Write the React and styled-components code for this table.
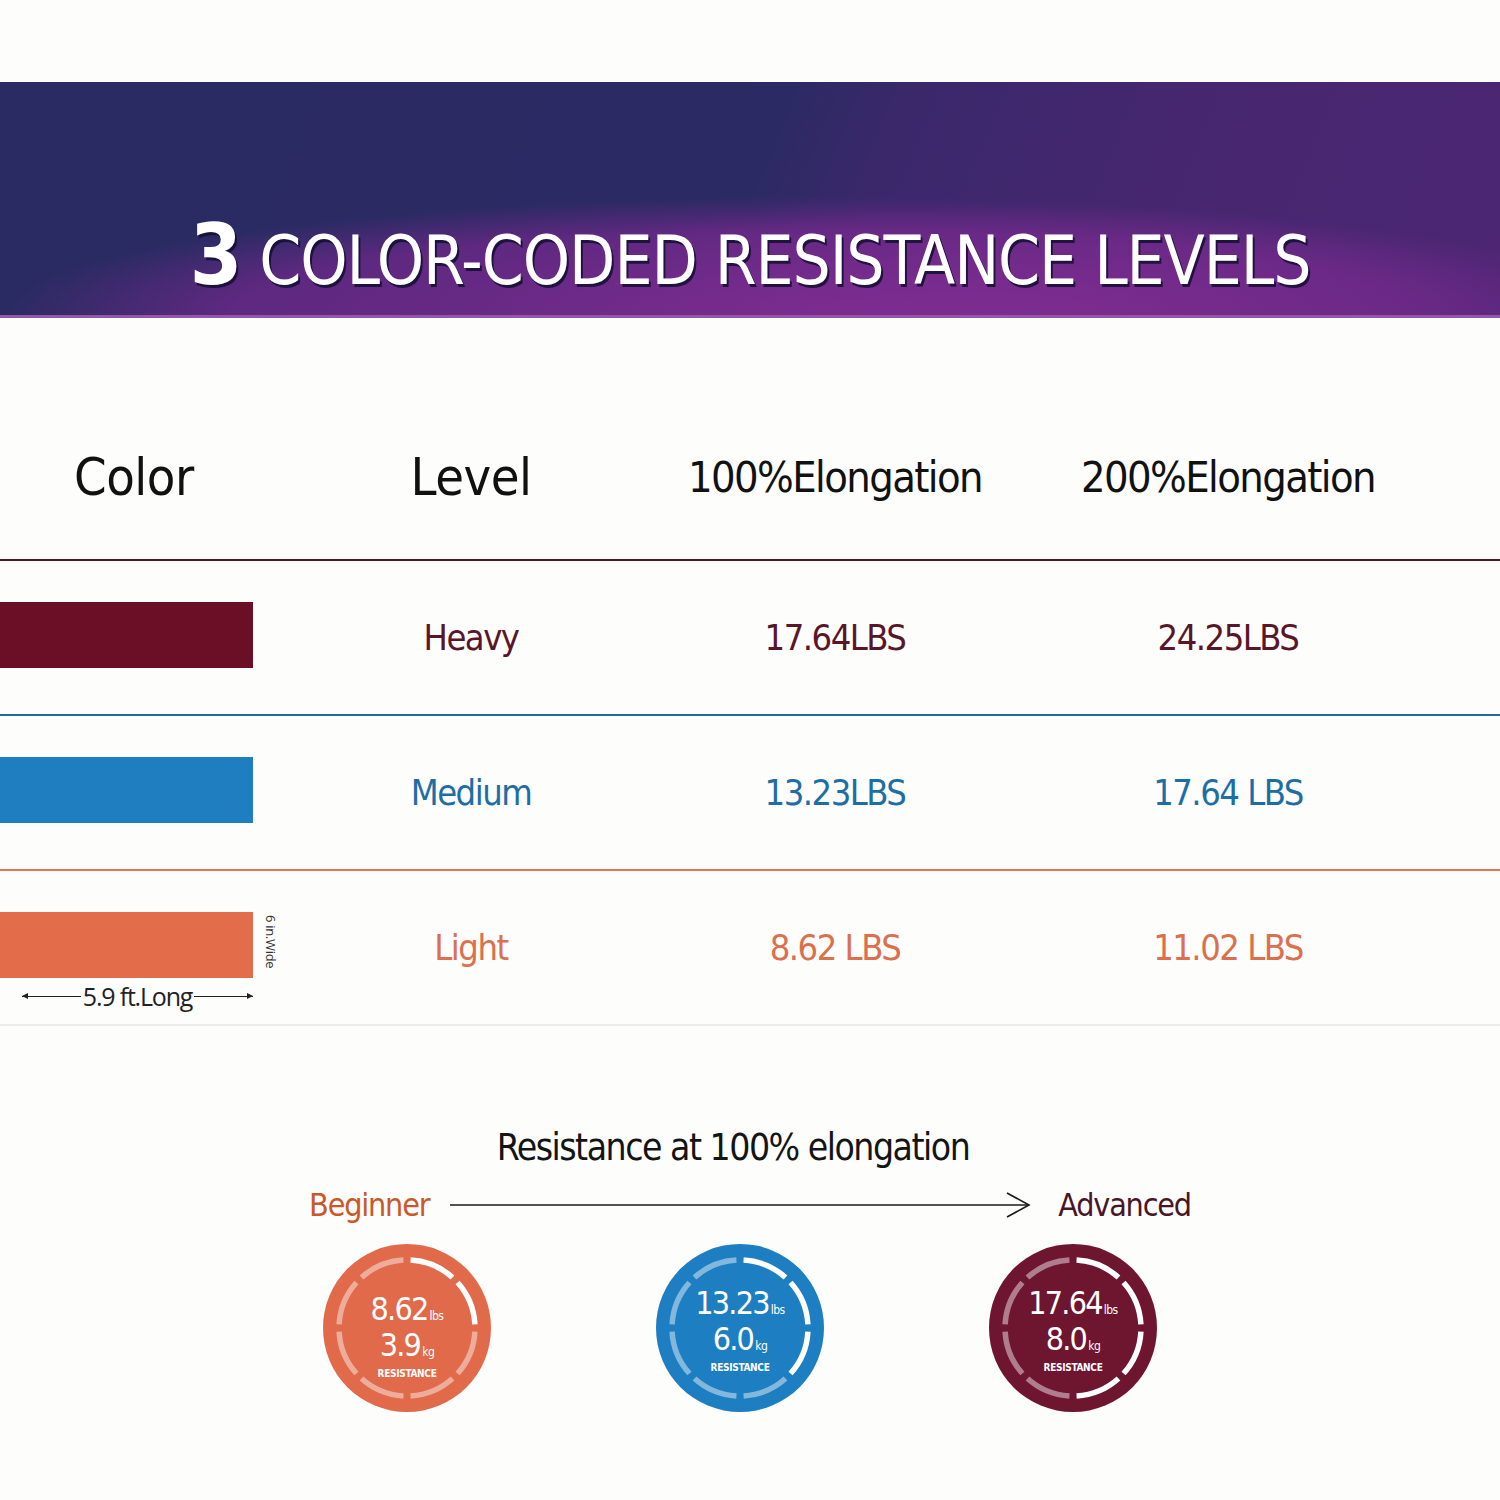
import React from "react";
import styled, { createGlobalStyle } from "styled-components";

const FONT = `"Liberation Sans Narrow", "DejaVu Sans Condensed", Roboto, sans-serif`;

const GlobalStyle = createGlobalStyle`
  body {
    margin: 0;
    background: #fdfdfb;
    font-family: ${FONT};
  }
`;

const Page = styled.div`
  width: 1500px;
  padding-top: 82px;
  padding-bottom: 80px;
  background: #fdfdfb;
`;

const Banner = styled.div`
  height: 236px;
  box-sizing: border-box;
  display: flex;
  align-items: flex-end;
  justify-content: center;
  padding-bottom: 18px;
  border-bottom: 3px solid #9456a8;
  background:
    radial-gradient(ellipse 560px 110px at 66% 100%, rgba(132, 46, 148, 0.7), rgba(132, 46, 148, 0) 100%),
    radial-gradient(ellipse 820px 118px at 55% 100%, rgba(116, 42, 140, 0.95) 0%, rgba(108, 40, 136, 0.8) 72%, rgba(100, 40, 130, 0) 100%),
    linear-gradient(112deg, #2a2b62 0%, #2c2a64 50%, #3a286b 57%, #46276f 75%, #4c2673 100%);
`;

const Title = styled.h1`
  margin: 0;
  display: flex;
  align-items: baseline;
  gap: 17px;
  color: #fff;
  font-weight: 400;
  font-size: 67px;
  line-height: 1;
  letter-spacing: -1.1px;
  text-shadow: 2px 3px 0 rgba(20, 14, 50, 0.85);
`;

const TitleNumber = styled.span`
  font-size: 84px;
  font-weight: 700;
  letter-spacing: 0;
`;

const COLS = "300px 342px 386px 400px";

const HeaderRow = styled.div`
  display: grid;
  grid-template-columns: ${COLS};
  align-items: center;
  height: 241px;
  box-sizing: border-box;
  padding-top: 76px;
`;

const HeadCell = styled.div`
  font-size: ${(p) => p.$size}px;
  letter-spacing: ${(p) => p.$ls}px;
  color: #111;
  text-align: ${(p) => (p.$left ? "left" : "center")};
  padding-left: ${(p) => (p.$left ? "74px" : "0")};
`;

const Table = styled.div`
  border-bottom: 2px solid #ececea;
`;

const Row = styled.div`
  display: grid;
  grid-template-columns: ${COLS};
  align-items: center;
  height: 155px;
  box-sizing: border-box;
  border-top: 2px solid ${(p) => p.$line};
`;

const SwatchCell = styled.div`
  align-self: start;
  padding-top: 41px;
  display: flex;
  flex-direction: column;
`;

const SwatchLine = styled.div`
  display: flex;
  align-items: flex-start;
`;

const Swatch = styled.div`
  width: 253px;
  height: 66px;
  background: ${(p) => p.$color};
`;

const SideLabel = styled.span`
  writing-mode: vertical-rl;
  font-family: "Open Sans", sans-serif;
  font-size: 13px;
  letter-spacing: -0.3px;
  color: #333;
  margin: 3px 0 0 9px;
`;

const Dimension = styled.div`
  display: flex;
  align-items: center;
  width: 231px;
  margin: 6px 0 0 22px;
  gap: 2px;
`;

const DimLine = styled.div`
  flex: 1;
  height: 1px;
  background: #222;
  position: relative;

  &::after {
    content: "";
    position: absolute;
    top: -3px;
    ${(p) => (p.$end ? "right: 0;" : "left: 0;")}
    border-top: 3.5px solid transparent;
    border-bottom: 3.5px solid transparent;
    ${(p) => (p.$end ? "border-left: 6px solid #222;" : "border-right: 6px solid #222;")}
  }
`;

const DimText = styled.span`
  font-family: "Open Sans", sans-serif;
  font-size: 25px;
  letter-spacing: -1.2px;
  color: #222;
  line-height: 1;
`;

const Cell = styled.div`
  font-size: 36px;
  letter-spacing: -1.5px;
  text-align: center;
  color: ${(p) => p.$color};
`;

const Lower = styled.div`
  padding-top: 98px;
  display: flex;
  flex-direction: column;
  align-items: center;
`;

const LowerTitle = styled.div`
  font-size: 37px;
  letter-spacing: -1.5px;
  color: #141414;
  line-height: 48px;
  margin-right: 34px;
`;

const ScaleRow = styled.div`
  display: flex;
  align-items: center;
  margin-top: 13px;
`;

const ScaleLabel = styled.span`
  font-size: 32px;
  letter-spacing: -1.2px;
  line-height: 40px;
  color: ${(p) => p.$color};
`;

const Arrow = styled.svg`
  margin: 0 26px 0 21px;
  display: block;
`;

const Badges = styled.div`
  display: flex;
  gap: 165px;
  margin-top: 19px;
  margin-right: 20px;
`;

const Badge = styled.div`
  position: relative;
  width: 168px;
  height: 168px;
  border-radius: 50%;
  background: ${(p) => p.$color};
  display: flex;
  flex-direction: column;
  align-items: center;
  justify-content: center;
  color: #fff;
  padding-top: ${(p) => p.$shift}px;
  box-sizing: border-box;
`;

const Ring = styled.svg`
  position: absolute;
  inset: 0;
`;

const Value = styled.div`
  font-size: 32px;
  line-height: 36px;
  height: 36px;
  letter-spacing: -1.8px;
`;

const Unit = styled.span`
  font-size: 12px;
  line-height: 1;
  letter-spacing: -0.5px;
  margin-left: 2px;
`;

const BadgeLabel = styled.div`
  font-size: 10px;
  line-height: 12px;
  font-weight: 700;
  margin-top: 5px;
  letter-spacing: -0.3px;
`;

const rows = [
  { level: "Heavy", swatch: "#6a0f25", text: "#5a1629", line: "#4d1424", e100: "17.64LBS", e200: "24.25LBS" },
  { level: "Medium", swatch: "#1f7ec0", text: "#1d6ea4", line: "#1f6aa0", e100: "13.23LBS", e200: "17.64 LBS" },
  { level: "Light", swatch: "#e36c4b", text: "#dc6f4c", line: "#e07450", e100: "8.62 LBS", e200: "11.02 LBS", dims: true },
];

const badges = [
  { lbs: "8.62", kg: "3.9", color: "#e06a4a", white: 2, shift: 14 },
  { lbs: "13.23", kg: "6.0", color: "#1e7ec2", white: 3, shift: 2 },
  { lbs: "17.64", kg: "8.0", color: "#6e1530", white: 4, shift: 2 },
];

const arcPath = (startDeg, endDeg, r) => {
  const toXY = (deg) => {
    const rad = ((deg - 90) * Math.PI) / 180;
    return [84 + r * Math.cos(rad), 84 + r * Math.sin(rad)];
  };
  const [x1, y1] = toXY(startDeg);
  const [x2, y2] = toXY(endDeg);
  return `M ${x1} ${y1} A ${r} ${r} 0 0 1 ${x2} ${y2}`;
};

const RingSegments = ({ white }) => (
  <Ring width="168" height="168" viewBox="0 0 168 168">
    {Array.from({ length: 8 }).map((_, i) => (
      <path
        key={i}
        d={arcPath(i * 45 + 3, i * 45 + 42, 68)}
        fill="none"
        stroke={i < white ? "#ffffff" : "rgba(255,255,255,0.45)"}
        strokeWidth="5.5"
      />
    ))}
  </Ring>
);

const App = () => {
  return (
    <Page>
      <GlobalStyle />
      <Banner>
        <Title>
          <TitleNumber>3</TitleNumber>
          COLOR-CODED RESISTANCE LEVELS
        </Title>
      </Banner>

      <HeaderRow>
        <HeadCell $size={52} $ls={-0.5} $left>Color</HeadCell>
        <HeadCell $size={52} $ls={-0.5}>Level</HeadCell>
        <HeadCell $size={43} $ls={-1.6}>100%Elongation</HeadCell>
        <HeadCell $size={43} $ls={-1.6}>200%Elongation</HeadCell>
      </HeaderRow>

      <Table>
        {rows.map((r) => (
          <Row key={r.level} $line={r.line}>
            <SwatchCell>
              <SwatchLine>
                <Swatch $color={r.swatch} />
                {r.dims && <SideLabel>6 in.Wide</SideLabel>}
              </SwatchLine>
              {r.dims && (
                <Dimension>
                  <DimLine />
                  <DimText>5.9 ft.Long</DimText>
                  <DimLine $end />
                </Dimension>
              )}
            </SwatchCell>
            <Cell $color={r.text}>{r.level}</Cell>
            <Cell $color={r.text}>{r.e100}</Cell>
            <Cell $color={r.text}>{r.e200}</Cell>
          </Row>
        ))}
      </Table>

      <Lower>
        <LowerTitle>Resistance at 100% elongation</LowerTitle>
        <ScaleRow>
          <ScaleLabel $color="#c8592b">Beginner</ScaleLabel>
          <Arrow width="582" height="28" viewBox="0 0 582 28">
            <line x1="0" y1="14" x2="579" y2="14" stroke="#1a1a1a" strokeWidth="1.6" />
            <polyline points="557,2 579,14 557,26" fill="none" stroke="#1a1a1a" strokeWidth="1.6" />
          </Arrow>
          <ScaleLabel $color="#4a1526">Advanced</ScaleLabel>
        </ScaleRow>
        <Badges>
          {badges.map((b) => (
            <Badge key={b.lbs} $color={b.color} $shift={b.shift}>
              <RingSegments white={b.white} />
              <Value>
                {b.lbs}
                <Unit>lbs</Unit>
              </Value>
              <Value>
                {b.kg}
                <Unit>kg</Unit>
              </Value>
              <BadgeLabel>RESISTANCE</BadgeLabel>
            </Badge>
          ))}
        </Badges>
      </Lower>
    </Page>
  );
};

export default App;
